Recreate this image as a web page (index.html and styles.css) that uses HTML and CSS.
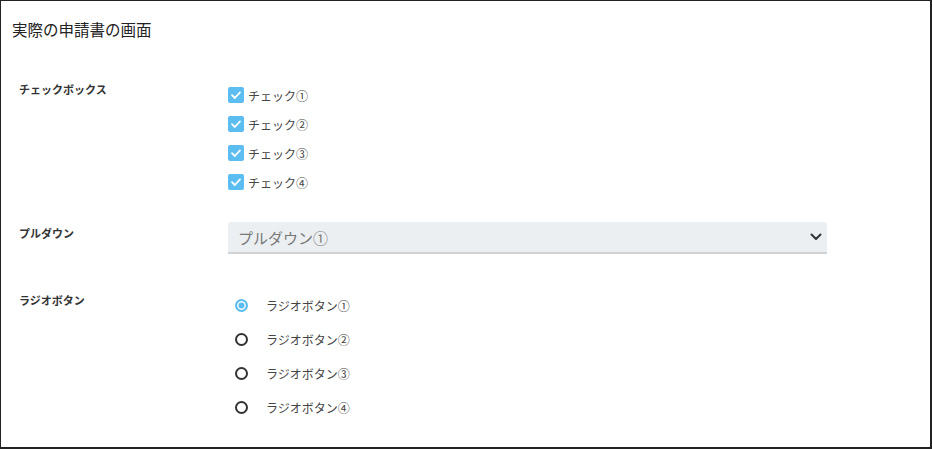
FILE: index.html
```html
<!DOCTYPE html>
<html lang="ja">
<head>
    <meta charset="UTF-8">
    <title>実際の申請書の画面</title>
    <link rel="stylesheet" href="styles.css">
</head>
<body>

<div class="frame">
    <h1 class="page-title">実際の申請書の画面</h1>

    <form class="form">
        <div class="row row-check">
            <div class="label">チェックボックス</div>
            <div class="field check-list">
                <label class="check"><span class="box"><svg viewBox="0 0 16 16" width="16" height="16"><path d="M4 8.2 L6.8 11 L12 5.4" fill="none" stroke="#fff" stroke-width="1.8" stroke-linecap="round" stroke-linejoin="round"/></svg></span>チェック①</label>
                <label class="check"><span class="box"><svg viewBox="0 0 16 16" width="16" height="16"><path d="M4 8.2 L6.8 11 L12 5.4" fill="none" stroke="#fff" stroke-width="1.8" stroke-linecap="round" stroke-linejoin="round"/></svg></span>チェック②</label>
                <label class="check"><span class="box"><svg viewBox="0 0 16 16" width="16" height="16"><path d="M4 8.2 L6.8 11 L12 5.4" fill="none" stroke="#fff" stroke-width="1.8" stroke-linecap="round" stroke-linejoin="round"/></svg></span>チェック③</label>
                <label class="check"><span class="box"><svg viewBox="0 0 16 16" width="16" height="16"><path d="M4 8.2 L6.8 11 L12 5.4" fill="none" stroke="#fff" stroke-width="1.8" stroke-linecap="round" stroke-linejoin="round"/></svg></span>チェック④</label>
            </div>
        </div>

        <div class="row row-select">
            <div class="label">プルダウン</div>
            <div class="field">
                <div class="select">
                    <span>プルダウン①</span>
                    <svg class="chevron" viewBox="0 0 12 8" width="12" height="8"><path d="M1.5 1.5 L6 6 L10.5 1.5" fill="none" stroke="#333" stroke-width="2" stroke-linecap="round" stroke-linejoin="round"/></svg>
                </div>
            </div>
        </div>

        <div class="row row-radio">
            <div class="label">ラジオボタン</div>
            <div class="field radio-list">
                <label class="radio checked"><span class="dot"></span>ラジオボタン①</label>
                <label class="radio"><span class="dot"></span>ラジオボタン②</label>
                <label class="radio"><span class="dot"></span>ラジオボタン③</label>
                <label class="radio"><span class="dot"></span>ラジオボタン④</label>
            </div>
        </div>
    </form>
</div>

</body>
</html>
```

FILE: styles.css
```css
html, body {
    margin: 0;
    padding: 0;
    background-color: #fff;
}

body {
    font-family: "Noto Sans CJK JP", "Noto Sans", sans-serif;
    color: #333;
}

.frame {
    box-sizing: border-box;
    width: 932px;
    height: 449px;
    border: 1px solid #222;
    border-right-width: 2px;
    border-bottom-width: 2px;
    overflow: hidden;
}

.page-title {
    margin: 0;
    padding: 17px 0 0 11px;
    height: 24px;
    font-size: 15.5px;
    font-weight: normal;
    line-height: 22px;
    color: #222;
}

.form {
    padding: 38px 0 0 0;
}

.row {
    display: flex;
}

.label {
    width: 227px;
    padding-left: 18px;
    box-sizing: border-box;
    font-size: 11px;
    font-weight: bold;
    line-height: 18px;
    color: #333;
}

.field {
    flex: none;
}

/* チェックボックス */
.check-list {
    display: flex;
    flex-direction: column;
    gap: 9px;
    padding-top: 5px;
}

.check {
    display: flex;
    align-items: center;
    height: 20px;
    font-size: 12px;
    color: #444;
}

.box {
    width: 16px;
    height: 16px;
    border-radius: 2px;
    background-color: #5bbdf0;
    margin-right: 4px;
    display: flex;
}

/* プルダウン */
.row-select {
    margin-top: 30px;
}

.row-select .label {
    padding-top: 2px;
}

.select {
    box-sizing: border-box;
    width: 599px;
    height: 32px;
    background-color: #eceff1;
    border-bottom: 2px solid #cfd3d6;
    border-radius: 3px 3px 0 0;
    display: flex;
    align-items: center;
    justify-content: space-between;
    padding: 0 5px 0 10px;
    font-size: 15px;
    color: #777;
}

/* ラジオボタン */
.row-radio {
    margin-top: 37px;
}

.radio-list {
    display: flex;
    flex-direction: column;
    gap: 14px;
    padding-top: 4px;
    padding-left: 7px;
}

.radio {
    display: flex;
    align-items: center;
    height: 20px;
    font-size: 12px;
    color: #444;
}

.dot {
    box-sizing: border-box;
    width: 13px;
    height: 13px;
    border-radius: 50%;
    border: 2px solid #333;
    margin-right: 18px;
}

.radio.checked .dot {
    border-color: #5bbdf0;
    background-color: #5bbdf0;
    box-shadow: inset 0 0 0 1.5px #fff;
}
```
